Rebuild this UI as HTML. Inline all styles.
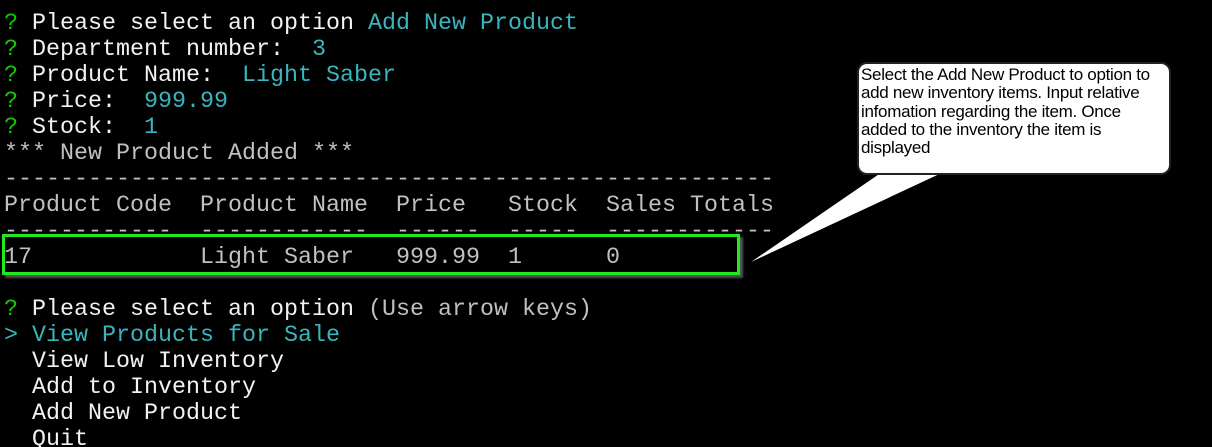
<!DOCTYPE html>
<html><head><style>
html,body{margin:0;padding:0;background:#000;width:1212px;height:447px;overflow:hidden;position:relative}
pre{position:absolute;left:4px;top:11px;margin:0;font-family:"Liberation Mono",monospace;font-size:23.33px;line-height:26px;color:#f2f2f2;letter-spacing:0}
.g{color:#16c60c}.c{color:#3ab5bd}.s{color:#c0c0c0}
.box{position:absolute;left:2px;top:234px;width:732px;height:35px;border:3px solid #22e822;box-shadow:3px 3px 2px #555}
.call{position:absolute;left:857px;top:62px;width:306px;height:107px;background:#fff;border:2px solid #222;border-radius:10px;font-family:"Liberation Sans",sans-serif;font-size:17px;line-height:18.3px;color:#000;padding:2px 2px 0 2px;box-sizing:content-box;letter-spacing:-0.3px;white-space:nowrap;overflow:hidden}
</style></head><body>
<div class="box"></div>
<pre><span class="g">?</span> Please select an option <span class="c">Add New Product</span>
<span class="g">?</span> Department number:  <span class="c">3</span>
<span class="g">?</span> Product Name:  <span class="c">Light Saber</span>
<span class="g">?</span> Price:  <span class="c">999.99</span>
<span class="g">?</span> Stock:  <span class="c">1</span>
<span class="s">*** New Product Added ***
-------------------------------------------------------
Product Code  Product Name  Price   Stock  Sales Totals
------------  ------------  ------  -----  ------------
17            Light Saber   999.99  1      0</span>

<span class="g">?</span> Please select an option <span class="s">(Use arrow keys)</span>
<span class="c">&gt; View Products for Sale</span>
  View Low Inventory
  Add to Inventory
  Add New Product
  Quit</pre>
<svg style="position:absolute;left:0;top:0" width="1212" height="447"><polygon points="885,170 948,170 751,262" fill="#fff"/></svg>
<div class="call">Select the Add New Product to option to<br>add new inventory items. Input relative<br>infomation regarding the item. Once<br>added to the inventory the item is<br>displayed</div>
</body></html>
